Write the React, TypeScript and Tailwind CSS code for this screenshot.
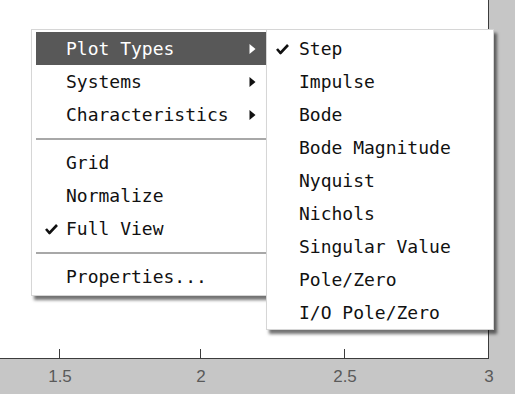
import { ReactNode } from 'react'

const mono = { fontFamily: '"DejaVu Sans Mono", "Liberation Mono", monospace' }

const Check = ({ light = false }: { light?: boolean }) => (
  <svg width="13" height="11" viewBox="0 0 13 11" className="absolute left-[9px] top-1/2 -translate-y-1/2">
    <path d="M1 5.5 L4.5 9.5 L12 1.5" fill="none" stroke={light ? '#fff' : '#111'} strokeWidth="2.6" />
  </svg>
)

const Arrow = ({ light = false }: { light?: boolean }) => (
  <svg width="7" height="11" viewBox="0 0 7 11" className="absolute right-[10px] top-1/2 -translate-y-1/2">
    <path d="M0.5 0.5 L6.5 5.5 L0.5 10.5 Z" fill={light ? '#fff' : '#111'} />
  </svg>
)

const Item = ({
  label,
  checked,
  submenu,
  active,
  indent = 'pl-[30px]',
}: {
  label: ReactNode
  checked?: boolean
  submenu?: boolean
  active?: boolean
  indent?: string
}) => (
  <div
    className={`relative flex h-[33px] items-center ${indent} text-[18px] leading-none ${
      active ? 'bg-[#585858] text-white' : 'text-[#111]'
    }`}
    style={mono}
  >
    {checked && <Check light={active} />}
    <span className="whitespace-pre">{label}</span>
    {submenu && <Arrow light={active} />}
  </div>
)

const Separator = () => (
  <div className="flex h-[15px] items-center">
    <div className="h-[2px] w-full bg-[#a8a8a8]" />
  </div>
)

const ticks = [
  { x: 59, label: '1.5' },
  { x: 200, label: '2' },
  { x: 344, label: '2.5' },
  { x: 488, label: '3' },
]

export default function App() {
  return (
    <div className="relative h-[394px] w-[515px] overflow-hidden bg-[#c6c6c6]">
      <div className="h-[359px] w-[489px] border-b border-r border-[#3c3c3c] bg-white" />

      {/* x axis */}
      {ticks.map((t) => (
        <div key={t.label}>
          <div className="absolute top-[349px] h-[10px] w-[1px] bg-[#3c3c3c]" style={{ left: t.x }} />
          <div
            className="absolute top-[366px] w-[40px] -translate-x-1/2 text-center text-[17px] leading-[22px] text-[#5a5a5a]"
            style={{ left: t.x + 1, fontFamily: '"Liberation Sans", Arial, sans-serif' }}
          >
            {t.label}
          </div>
        </div>
      ))}

      {/* main context menu */}
      <div className="absolute left-[31px] top-[29px] w-[240px] border border-[#d6d6d6] bg-white px-[4px] py-[2px] shadow-[3px_4px_3px_rgba(0,0,0,0.55)]">
        <Item label="Plot Types" submenu active />
        <Item label="Systems" submenu />
        <Item label="Characteristics" submenu />
        <Separator />
        <Item label="Grid" />
        <Item label="Normalize" />
        <Item label="Full View" checked />
        <Separator />
        <Item label="Properties..." />
      </div>

      {/* submenu */}
      <div className="absolute left-[266px] top-[29px] w-[228px] border border-[#d6d6d6] bg-white pt-[2px] shadow-[3px_4px_3px_rgba(0,0,0,0.55)]">
        <Item label="Step" checked indent="pl-[32px]" />
        <Item label="Impulse" indent="pl-[32px]" />
        <Item label="Bode" indent="pl-[32px]" />
        <Item label="Bode Magnitude" indent="pl-[32px]" />
        <Item label="Nyquist" indent="pl-[32px]" />
        <Item label="Nichols" indent="pl-[32px]" />
        <Item label="Singular Value" indent="pl-[32px]" />
        <Item label="Pole/Zero" indent="pl-[32px]" />
        <Item label="I/O Pole/Zero" indent="pl-[32px]" />
      </div>
    </div>
  )
}
